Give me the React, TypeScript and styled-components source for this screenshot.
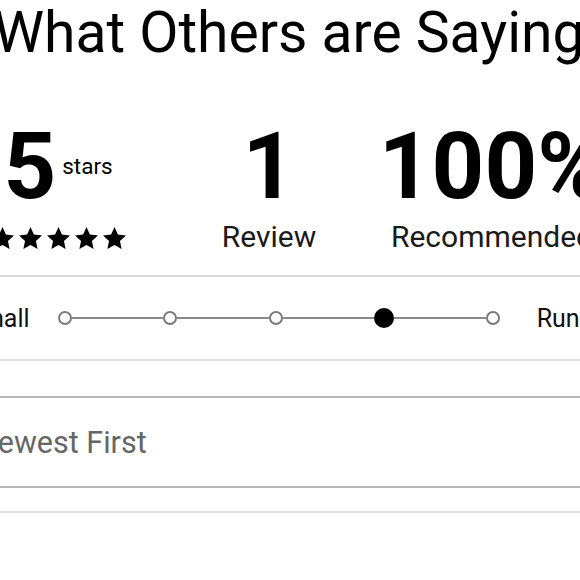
import React from "react";
import styled, { createGlobalStyle } from "styled-components";

const Global = createGlobalStyle`
  html, body { margin: 0; padding: 0; background: #fff; overflow: hidden; }
  body { font-family: Roboto, "Noto Sans", Arial, sans-serif; color: #000; }
`;

const Page = styled.div`
  width: 820px;
  margin-left: -121px;
`;

const Title = styled.h1`
  margin: 0;
  font-size: 57px;
  line-height: 66px;
  font-weight: 400;
  text-align: center;
  white-space: nowrap;
  color: #000;
`;

const Stats = styled.section`
  display: grid;
  grid-template-columns: 224px 198px 248px;
  padding-left: 67px;
  padding-top: 55px;
`;

const Stat = styled.div`
  display: flex;
  flex-direction: column;
  align-items: center;
`;

const NumberRow = styled.div`
  display: flex;
  align-items: flex-start;
`;

const BigNumber = styled.span`
  font-size: 92px;
  line-height: 92px;
  font-weight: 700;
  white-space: nowrap;
`;

const Unit = styled.span`
  font-size: 22.5px;
  line-height: 26px;
  margin-left: 6px;
  margin-top: 32px;
`;

const Label = styled.span`
  font-size: 30px;
  line-height: 36px;
  margin-top: 6px;
  color: #1a1a1a;
  white-space: nowrap;
`;

const Stars = styled.div`
  display: flex;
  gap: 5px;
  margin-top: 14px;
  height: 22px;
`;

const Divider = styled.hr<{ $top?: number }>`
  border: none;
  margin: ${(p) => p.$top ?? 0}px 0 0;
  height: 2px;
  background: #dcdcdc;
`;

const FitRow = styled.div`
  display: flex;
  align-items: center;
  height: 82px;
  padding-left: 26px;
`;

const SideLabel = styled.span`
  font-size: 25px;
  white-space: nowrap;
  color: #111;
`;

const Track = styled.div`
  display: flex;
  align-items: center;
  width: 442px;
  margin: 0 37px 0 28px;
`;

const Segment = styled.span`
  flex: 1;
  height: 2px;
  background: #8a8a8a;
`;

const Dot = styled.span<{ $active?: boolean }>`
  box-sizing: border-box;
  width: ${(p) => (p.$active ? 20 : 14)}px;
  height: ${(p) => (p.$active ? 20 : 14)}px;
  border-radius: 50%;
  border: 2px solid ${(p) => (p.$active ? "#000" : "#7a7a7a")};
  background: ${(p) => (p.$active ? "#000" : "#fff")};
  flex: none;
`;

const SortBox = styled.div`
  margin-top: 35px;
  height: 88px;
  border-top: 2px solid #b8b8b8;
  border-bottom: 2px solid #b8b8b8;
  display: flex;
  align-items: center;
  padding-left: 97px;
  font-size: 30.5px;
  color: #666;
`;

const Star = () => (
  <svg width="23" height="22" viewBox="2.06 2 19.88 18.73" preserveAspectRatio="none" aria-hidden="true">
    <path
      d="M12 2l2.94 6.36 6.97.78-5.2 4.73 1.45 6.86L12 17.27l-6.16 3.46 1.45-6.86-5.2-4.73 6.97-.78z"
      fill="#000"
    />
  </svg>
);

export default function App() {
  const steps = [false, false, false, true, false];
  return (
    <>
      <Global />
      <Page>
        <Title>What Others are Saying</Title>
        <Stats>
          <Stat>
            <NumberRow>
              <BigNumber>5</BigNumber>
              <Unit>stars</Unit>
            </NumberRow>
            <Stars>
              {[0, 1, 2, 3, 4].map((i) => (
                <Star key={i} />
              ))}
            </Stars>
          </Stat>
          <Stat>
            <BigNumber>1</BigNumber>
            <Label>Review</Label>
          </Stat>
          <Stat>
            <BigNumber>100%</BigNumber>
            <Label>Recommended</Label>
          </Stat>
        </Stats>
        <Divider $top={20} />
        <FitRow>
          <SideLabel>Runs Small</SideLabel>
          <Track>
            {steps.map((a, i) => (
              <React.Fragment key={i}>
                {i > 0 && <Segment />}
                <Dot $active={a} />
              </React.Fragment>
            ))}
          </Track>
          <SideLabel>Runs Large</SideLabel>
        </FitRow>
        <Divider />
        <SortBox>Newest First</SortBox>
        <Divider $top={23} />
      </Page>
    </>
  );
}
